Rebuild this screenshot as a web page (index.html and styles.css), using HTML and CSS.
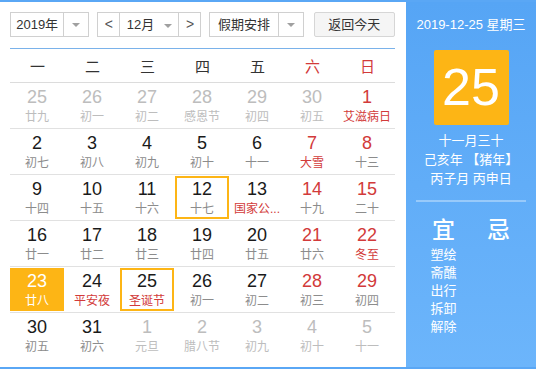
FILE: index.html
```html
<!DOCTYPE html>
<html lang="zh-CN">
<head>
    <meta charset="UTF-8">
    <title>万年历</title>
    <link rel="stylesheet" href="styles.css">
</head>
<body>
    <div class="calendar">
        <div class="main">
            <div class="toolbar">
                <div class="select year">
                    <span class="label">2019年</span>
                    <span class="arrow"></span>
                </div>
                <div class="select month">
                    <span class="step">&lt;</span>
                    <span class="label">12月 <i class="tri"></i></span>
                    <span class="step">&gt;</span>
                </div>
                <div class="select holiday">
                    <span class="label">假期安排</span>
                    <span class="arrow"></span>
                </div>
                <div class="today-btn">返回今天</div>
            </div>

            <div class="weekdays">
                <span>一</span><span>二</span><span>三</span><span>四</span><span>五</span>
                <span class="red">六</span><span class="red">日</span>
            </div>

            <div class="week">
                <div class="day other"><b>25</b><small>廿九</small></div>
                <div class="day other"><b>26</b><small>初一</small></div>
                <div class="day other"><b>27</b><small>初二</small></div>
                <div class="day other"><b>28</b><small>感恩节</small></div>
                <div class="day other"><b>29</b><small>初四</small></div>
                <div class="day other"><b>30</b><small>初五</small></div>
                <div class="day weekend fest"><b>1</b><small>艾滋病日</small></div>
            </div>
            <div class="week">
                <div class="day"><b>2</b><small>初七</small></div>
                <div class="day"><b>3</b><small>初八</small></div>
                <div class="day"><b>4</b><small>初九</small></div>
                <div class="day"><b>5</b><small>初十</small></div>
                <div class="day"><b>6</b><small>十一</small></div>
                <div class="day weekend fest"><b>7</b><small>大雪</small></div>
                <div class="day weekend"><b>8</b><small>十三</small></div>
            </div>
            <div class="week">
                <div class="day"><b>9</b><small>十四</small></div>
                <div class="day"><b>10</b><small>十五</small></div>
                <div class="day"><b>11</b><small>十六</small></div>
                <div class="day picked"><b>12</b><small>十七</small></div>
                <div class="day fest"><b>13</b><small>国家公...</small></div>
                <div class="day weekend"><b>14</b><small>十九</small></div>
                <div class="day weekend"><b>15</b><small>二十</small></div>
            </div>
            <div class="week">
                <div class="day"><b>16</b><small>廿一</small></div>
                <div class="day"><b>17</b><small>廿二</small></div>
                <div class="day"><b>18</b><small>廿三</small></div>
                <div class="day"><b>19</b><small>廿四</small></div>
                <div class="day"><b>20</b><small>廿五</small></div>
                <div class="day weekend"><b>21</b><small>廿六</small></div>
                <div class="day weekend fest"><b>22</b><small>冬至</small></div>
            </div>
            <div class="week">
                <div class="day today"><b>23</b><small>廿八</small></div>
                <div class="day fest"><b>24</b><small>平安夜</small></div>
                <div class="day picked fest"><b>25</b><small>圣诞节</small></div>
                <div class="day"><b>26</b><small>初一</small></div>
                <div class="day"><b>27</b><small>初二</small></div>
                <div class="day weekend"><b>28</b><small>初三</small></div>
                <div class="day weekend"><b>29</b><small>初四</small></div>
            </div>
            <div class="week">
                <div class="day"><b>30</b><small>初五</small></div>
                <div class="day"><b>31</b><small>初六</small></div>
                <div class="day other"><b>1</b><small>元旦</small></div>
                <div class="day other"><b>2</b><small>腊八节</small></div>
                <div class="day other"><b>3</b><small>初九</small></div>
                <div class="day other"><b>4</b><small>初十</small></div>
                <div class="day other"><b>5</b><small>十一</small></div>
            </div>
        </div>

        <div class="side">
            <div class="side-date">2019-12-25 星期三</div>
            <div class="big-day">25</div>
            <div class="lunar">
                <div>十一月三十</div>
                <div>己亥年 【猪年】</div>
                <div>丙子月 丙申日</div>
            </div>
            <div class="divider"></div>
            <div class="yiji">
                <div class="col">
                    <h3>宜</h3>
                    <ul>
                        <li>塑绘</li>
                        <li>斋醮</li>
                        <li>出行</li>
                        <li>拆卸</li>
                        <li>解除</li>
                    </ul>
                </div>
                <div class="col">
                    <h3>忌</h3>
                </div>
            </div>
        </div>
    </div>
</body>
</html>
```

FILE: styles.css
```css
:root {
    --blue: #5aa7f5;
    --gold: #fdb515;
    --red: #d23a3a;
    --line: #e1e1e1;
}

body {
    margin: 0;
    font-family: "Liberation Sans", "Noto Sans CJK SC", sans-serif;
    color: #1a1a1a;
}

.calendar {
    display: flex;
    width: 536px;
    height: 369px;
    box-sizing: border-box;
    border-top: 2px solid var(--blue);
    border-bottom: 2px solid var(--blue);
}

.main {
    width: 406px;
    padding: 10px 11px 0 10px;
    box-sizing: border-box;
    background: #fff;
}

/* toolbar */
.toolbar {
    display: flex;
    height: 25px;
    font-size: 13px;
    color: #333;
}

.select {
    display: flex;
    height: 25px;
    box-sizing: border-box;
    border: 1px solid #d0d0d0;
    background: #fff;
}

.select .label {
    flex: 1;
    line-height: 23px;
    text-align: center;
}

.select .arrow {
    width: 24px;
    border-left: 1px solid #d0d0d0;
    display: flex;
    align-items: center;
    justify-content: center;
}

.arrow::after,
.tri {
    content: "";
    display: inline-block;
    border-left: 4px solid transparent;
    border-right: 4px solid transparent;
    border-top: 4px solid #a0a0a0;
}

.tri {
    margin-left: 6px;
    vertical-align: middle;
}

.year { width: 80px; margin-right: 8px; }
.month { width: 105px; margin-right: 8px; }
.holiday { width: 95px; margin-right: 10px; }

.month .step {
    width: 21px;
    line-height: 23px;
    text-align: center;
    color: #555;
    font-size: 14px;
}

.month .step:first-child { border-right: 1px solid #d0d0d0; }
.month .step:last-child { border-left: 1px solid #d0d0d0; }

.today-btn {
    width: 82px;
    height: 25px;
    box-sizing: border-box;
    border: 1px solid #d6d6d6;
    background: #f5f5f5;
    border-radius: 2px;
    line-height: 23px;
    text-align: center;
}

/* grid */
.weekdays,
.week {
    display: grid;
    grid-template-columns: repeat(7, 55px);
}

.weekdays {
    margin-top: 11px;
    height: 33px;
    border-top: 1px solid #7ab2ea;
    border-bottom: 1px solid #dcdcdc;
    align-items: center;
    text-align: center;
    font-size: 15px;
    color: #333;
}

.weekdays .red { color: var(--red); }

.week {
    height: 45px;
    border-bottom: 1px solid var(--line);
}

.week:last-child { border-bottom: none; }

.day {
    margin: 1px 1px 1px 0;
    border: 2px solid transparent;
    text-align: center;
    overflow: hidden;
}

.day b {
    display: block;
    padding-top: 1px;
    font-weight: normal;
    font-size: 18px;
    line-height: 20px;
}

.day small {
    display: block;
    margin-top: 2px;
    font-size: 12px;
    line-height: 16px;
    color: #8c8c8c;
    white-space: nowrap;
}

.day.weekend b { color: var(--red); }
.day.fest small { color: var(--red); }
.day.other b,
.day.other small { color: #bdbdbd; }
.day.other.fest small { color: var(--red); }

.day.picked { border-color: var(--gold); }

.day.today {
    background: var(--gold);
    border-color: var(--gold);
}

.day.today b,
.day.today small { color: #fff; }

/* side panel */
.side {
    flex: 1;
    background: linear-gradient(#56a5f5, #6cb5fb);
    color: #fff;
    text-align: center;
    padding-top: 14px;
}

.side-date {
    font-size: 13px;
    line-height: 18px;
}

.big-day {
    width: 75px;
    height: 75px;
    margin: 16px auto 0;
    background: var(--gold);
    border-radius: 2px;
    font-size: 52px;
    line-height: 75px;
}

.lunar {
    margin-top: 6px;
    font-size: 13px;
    line-height: 19px;
}

.divider {
    height: 2px;
    margin: 12px 10px 0;
    background: rgba(255, 255, 255, 0.35);
}

.yiji {
    display: grid;
    grid-template-columns: 55px 55px;
    margin: 13px 10px 0;
}

.yiji h3 {
    margin: 0;
    font-size: 23px;
    font-weight: 500;
    line-height: 26px;
    font-family: "Noto Sans CJK SC", sans-serif;
}

.yiji ul {
    list-style: none;
    margin: 5px 0 0;
    padding: 0;
    font-size: 13px;
    line-height: 18px;
}
```
